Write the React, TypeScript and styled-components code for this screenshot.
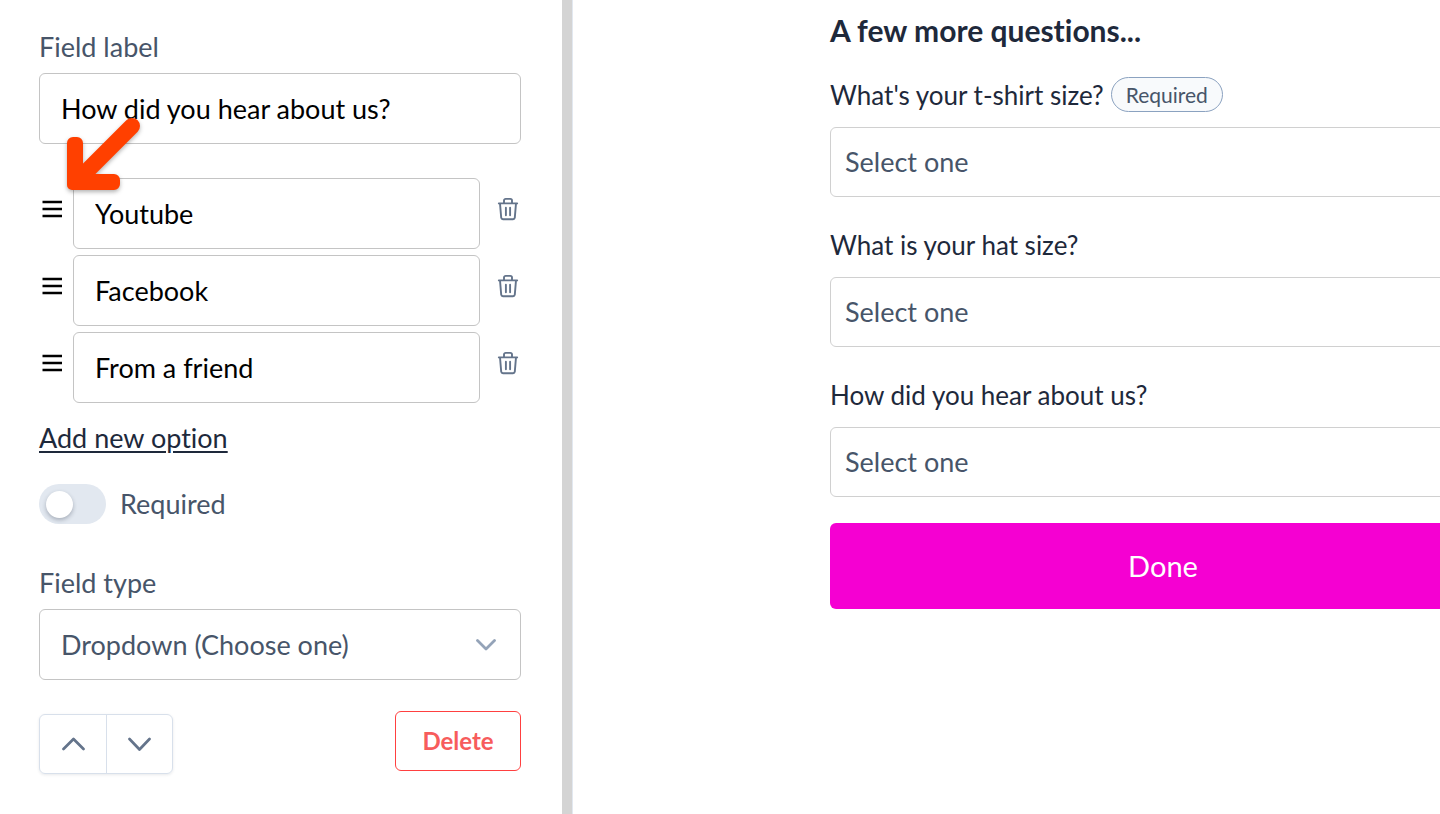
import React from 'react';
import styled, { createGlobalStyle } from 'styled-components';

const GlobalStyle = createGlobalStyle`
  *, *::before, *::after { box-sizing: border-box; }
  body {
    margin: 0;
    background: #fff;
    color: #1e293b;
    font-family: Lato, "Liberation Sans", sans-serif;
    font-size: 27px;
    line-height: 32px;
    font-variant-ligatures: none;
  }
  button, input, select { font: inherit; font-variant-ligatures: none; color: inherit; margin: 0; }
`;

const Page = styled.div`
  display: flex;
  min-height: 100vh;
  overflow: hidden;
`;

const Editor = styled.section`
  flex: 0 0 573px;
  padding: 31px 51px 31px 39px;
  border-right: 1px solid #e2e8f0;
  box-shadow: inset -10px 0 0 #d4d4d4;
`;

const Field = styled.div`
  display: flex;
  flex-direction: column;
  gap: 10px;
`;

const FieldLabel = styled.label`
  color: #475569;
`;

const TextInput = styled.input`
  width: 100%;
  min-width: 0;
  height: 71px;
  padding: 0 21px;
  border: 1px solid #c4c4c4;
  border-radius: 6px;
  background: #fff;
  color: #000;
  outline: none;
`;

const OptionList = styled.ul`
  display: flex;
  flex-direction: column;
  gap: 6px;
  margin: 34px 0 19px;
  padding: 0;
  list-style: none;
`;

const OptionRow = styled.li`
  position: relative;
  display: flex;
  align-items: flex-start;
`;

const DragSlot = styled.div`
  flex: none;
  width: 34px;
`;

const IconSlot = styled.div`
  flex: none;
  width: 41px;
`;

const IconButton = styled.button<{ $color: string; $width: number }>`
  display: flex;
  align-items: center;
  justify-content: flex-end;
  width: ${(p) => p.$width}px;
  height: 62px;
  padding: 0;
  border: 0;
  background: none;
  color: ${(p) => p.$color};
`;

const Pointer = styled.svg`
  position: absolute;
  left: 22px;
  top: -66px;
  overflow: visible;
  pointer-events: none;
  filter: drop-shadow(0 2px 2px rgba(0, 0, 0, 0.3));
`;

const AddLink = styled.a`
  color: #1e293b;
  text-decoration: underline;
  text-decoration-thickness: 2px;
  text-underline-offset: 3px;
`;

const ToggleRow = styled.label`
  display: flex;
  align-items: center;
  gap: 14px;
  margin: 30px 0 43px;
  color: #475569;
`;

const Toggle = styled.input`
  appearance: none;
  display: flex;
  align-items: center;
  width: 67px;
  height: 40px;
  padding: 0 7px;
  border-radius: 20px;
  background: #e2e8f0;
  &::before {
    content: "";
    width: 27px;
    height: 27px;
    border-radius: 50%;
    background: #fff;
    box-shadow: 0 2px 4px rgba(30, 41, 59, 0.3);
  }
`;

const SelectWrap = styled.div`
  display: grid;
  align-items: center;
  & > * { grid-area: 1 / 1; }
  & > svg { justify-self: end; margin-right: 25px; pointer-events: none; }
`;

const Select = styled.select<{ $preview?: boolean }>`
  appearance: none;
  width: 100%;
  height: ${(p) => (p.$preview ? 70 : 71)}px;
  padding: 0 ${(p) => (p.$preview ? 14 : 21)}px;
  border: 1px solid ${(p) => (p.$preview ? '#d0d0d0' : '#c4c4c4')};
  border-radius: 6px;
  background: #fff;
  color: #475569;
  outline: none;
`;

const Actions = styled.div`
  display: flex;
  justify-content: space-between;
  min-height: 63px;
  margin-top: 31px;
`;

const MoveGroup = styled.div`
  display: flex;
  align-self: flex-end;
  border: 1px solid #d8e0eb;
  border-radius: 6px;
  box-shadow: 0 1px 3px rgba(30, 41, 59, 0.1);
`;

const MoveButton = styled.button`
  display: flex;
  align-items: center;
  justify-content: center;
  width: 66px;
  height: 58px;
  padding: 0;
  border: 0;
  background: none;
  & + & { border-left: 1px solid #d8e0eb; }
`;

const DeleteButton = styled.button`
  align-self: flex-start;
  width: 126px;
  height: 60px;
  padding: 0;
  border: 1px solid #ff4040;
  border-radius: 6px;
  background: #fff;
  color: #f75c5c;
  font-size: 24px;
  font-weight: 700;
`;

const Preview = styled.main`
  flex: 1;
  min-width: 0;
  padding: 12px 0 0 257px;
`;

const Form = styled.form`
  margin-right: -56px;
`;

const Title = styled.h1`
  margin: 0 0 29px;
  font-size: 30px;
  line-height: 36px;
  font-weight: 700;
`;

const Question = styled.div`
  margin-bottom: 30px;
  &:last-of-type { margin-bottom: 26px; }
`;

const QuestionHead = styled.div`
  display: flex;
  align-items: center;
  gap: 7px;
  height: 35px;
  margin-bottom: 15px;
  font-size: 26px;
`;

const Badge = styled.span`
  padding: 0 14px;
  border: 1px solid #8ba2c0;
  border-radius: 18px;
  background: #f8fafc;
  color: #475569;
  font-size: 21px;
  line-height: 33px;
`;

const DoneButton = styled.button`
  display: block;
  width: 100%;
  height: 86px;
  border: 0;
  border-radius: 6px;
  background: #f500d2;
  color: #fff;
  font-size: 29px;
`;

const DragIcon = () => (
  <svg width="20" height="18" viewBox="0 0 20 18" fill="none" stroke="currentColor" strokeWidth="2.4" aria-hidden="true">
    <path d="M0.5 2h19.5M0.5 9h19.5M0.5 16h19.5" />
  </svg>
);

const TrashIcon = () => (
  <svg width="22" height="24" viewBox="0 0 22 24" fill="none" stroke="currentColor" strokeWidth="1.9" strokeLinecap="round" strokeLinejoin="round" aria-hidden="true">
    <path d="M1.8 6.4h18.4M3 6.4l1.2 14.2a1.8 1.8 0 0 0 1.8 1.6h10a1.8 1.8 0 0 0 1.8-1.6L19 6.4M7 6.2V3.6a1.7 1.7 0 0 1 1.7-1.7h4.6a1.7 1.7 0 0 1 1.7 1.7v2.6M8.9 10.8v7.4M13.1 10.8v7.4" />
  </svg>
);

const SelectChevron = () => (
  <svg width="20" height="12" viewBox="0 0 20 12" fill="none" stroke="#94a3b8" strokeWidth="2.8" strokeLinecap="round" strokeLinejoin="round" aria-hidden="true">
    <path d="M1.5 1.5L10 10l8.500-8.500" />
  </svg>
);

const MoveChevron = ({ up }: { up?: boolean }) => (
  <svg width="23" height="14" viewBox="0 0 23 14" fill="none" stroke="#64748b" strokeWidth="2.7" strokeLinecap="round" strokeLinejoin="round" aria-hidden="true">
    <path d={up ? 'M1.500 12L11.500 2l10 10' : 'M1.500 2l10 10.500L21.500 2'} />
  </svg>
);

const options = ['Youtube', 'Facebook', 'From a friend'];

const questions = [
  { id: 'shirt', text: "What's your t-shirt size?", required: true },
  { id: 'hat', text: 'What is your hat size?', required: false },
  { id: 'hear', text: 'How did you hear about us?', required: false },
];

export default function App() {
  return (
    <>
      <GlobalStyle />
      <Page>
        <Editor>
          <Field>
            <FieldLabel htmlFor="field-label">Field label</FieldLabel>
            <TextInput id="field-label" defaultValue="How did you hear about us?" />
          </Field>
          <OptionList>
            {options.map((option, i) => (
              <OptionRow key={option}>
                <DragSlot>
                  <IconButton type="button" $color="#000" $width={23} aria-label={`Reorder ${option}`}>
                    <DragIcon />
                  </IconButton>
                </DragSlot>
                <TextInput aria-label={`Option ${i + 1}`} defaultValue={option} />
                <IconSlot>
                  <IconButton type="button" $color="#64748b" $width={39} aria-label={`Remove ${option}`}>
                    <TrashIcon />
                  </IconButton>
                </IconSlot>
                {i === 0 && (
                  <Pointer width="90" height="90" viewBox="0 0 90 90" aria-hidden="true">
                    <path d="M71 14L16 69" stroke="#ff4000" strokeWidth="16" strokeLinecap="round" />
                    <path d="M6 31a6 6 0 0 1 6-6h4a6 6 0 0 1 6 6v31h31a6 6 0 0 1 6 6v4a6 6 0 0 1-6 6H11a5 5 0 0 1-5-5z" fill="#ff4000" />
                  </Pointer>
                )}
              </OptionRow>
            ))}
          </OptionList>
          <AddLink href="#add-option">Add new option</AddLink>
          <ToggleRow>
            <Toggle type="checkbox" role="switch" />
            Required
          </ToggleRow>
          <Field>
            <FieldLabel htmlFor="field-type">Field type</FieldLabel>
            <SelectWrap>
              <Select id="field-type">
                <option>Dropdown (Choose one)</option>
              </Select>
              <SelectChevron />
            </SelectWrap>
          </Field>
          <Actions>
            <MoveGroup>
              <MoveButton type="button" aria-label="Move up">
                <MoveChevron up />
              </MoveButton>
              <MoveButton type="button" aria-label="Move down">
                <MoveChevron />
              </MoveButton>
            </MoveGroup>
            <DeleteButton type="button">Delete</DeleteButton>
          </Actions>
        </Editor>
        <Preview>
          <Form>
            <Title>A few more questions...</Title>
            {questions.map((q) => (
              <Question key={q.id}>
                <QuestionHead>
                  <label htmlFor={q.id}>{q.text}</label>
                  {q.required && <Badge>Required</Badge>}
                </QuestionHead>
                <Select id={q.id} $preview>
                  <option>Select one</option>
                </Select>
              </Question>
            ))}
            <DoneButton type="button">Done</DoneButton>
          </Form>
        </Preview>
      </Page>
    </>
  );
}
